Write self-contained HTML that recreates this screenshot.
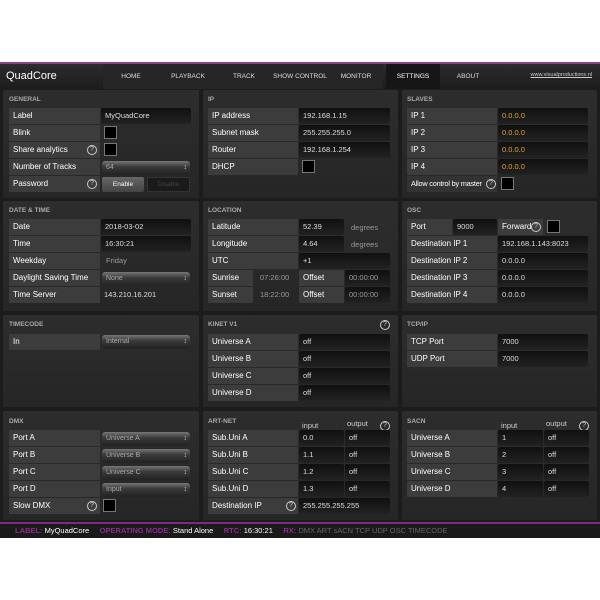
<!DOCTYPE html><html><head><style>
*{margin:0;padding:0;box-sizing:border-box}
body{width:600px;height:600px;background:#fff;position:relative;font-family:"Liberation Sans",sans-serif;overflow:hidden;color:#fff}
div{position:absolute}
#hdr{left:0;top:62px;width:600px;height:27px;background:linear-gradient(#2e2c2e,#1c1c1c);border-top:2px solid #8a3f8f}
#main{left:0;top:89px;width:600px;height:433px;background:#1c1c1c}
.nav{top:0;height:25px;line-height:25px;font-size:6.5px;color:#ddd;text-align:center;width:56px}
.p{background:linear-gradient(#2d2d2d,#262626);border-radius:2px}
.t{font-size:6.5px;color:#aaa;font-weight:bold}
.l{height:16px;line-height:16px;background:#3c3c3c;font-size:8px;padding-left:4px;color:#fff;white-space:nowrap}
.v{height:16px;line-height:16px;background:linear-gradient(#101010,#222);font-size:7.5px;padding-left:4px;color:#ddd;border-radius:2px}
.n{height:16px;line-height:16px;font-size:7.5px;padding-left:4px;color:#999}
.s{height:14px;line-height:14px;background:linear-gradient(#777,#3a3a3a 40%,#222);font-size:7px;padding-left:4px;color:#aaa;border-radius:3px}
.s:after{content:"\2195";position:absolute;right:3px;top:0;font-size:7px;color:#ccc}
.cb{width:13px;height:13px;background:#000;border:1px solid #777}
.q{width:10px;height:10px;border:1px solid #ccc;border-radius:50%;font-size:7px;line-height:8px;text-align:center;color:#ccc}
.h{font-size:7.5px;color:#ccc}
#st{left:0;top:522px;width:600px;height:16px;background:#1a1a1a;border-top:2px solid #7b2b84;font-size:7.5px;line-height:14px}
.m{color:#8b2c8f;font-weight:bold}
</style></head><body>
<div id="hdr">
<div style="left:6px;top:0;line-height:25px;font-size:11px;color:#fff">QuadCore</div>
<div style="left:103px;top:0;width:280px;height:25px;background:#262626"></div>
<div class="nav" style="left:103px">HOME</div>
<div class="nav" style="left:160px">PLAYBACK</div>
<div class="nav" style="left:216px">TRACK</div>
<div class="nav" style="left:272px">SHOW CONTROL</div>
<div class="nav" style="left:328px">MONITOR</div>
<div class="nav" style="left:386px;background:#161616;color:#fff;width:54px">SETTINGS</div>
<div class="nav" style="left:440px">ABOUT</div>
<div style="left:480px;width:112px;top:0;line-height:23px;font-size:5.5px;text-align:right;color:#ccc;text-decoration:underline">www.visualproductions.nl</div>
</div>
<div id="main"></div>

<!-- row1 -->
<div class="p" style="left:3px;top:90px;width:196px;height:108px"></div>
<div class="t" style="left:9px;top:96px">GENERAL</div>
<div class="l" style="left:9px;top:108px;width:91px">Label</div><div class="v" style="left:101px;top:108px;width:90px">MyQuadCore</div>
<div class="l" style="left:9px;top:125px;width:91px">Blink</div><div class="cb" style="left:104px;top:126px"></div>
<div class="l" style="left:9px;top:142px;width:91px">Share analytics</div><div class="q" style="left:87px;top:145px">?</div><div class="cb" style="left:104px;top:143px"></div>
<div class="l" style="left:9px;top:159px;width:91px">Number of Tracks</div><div class="s" style="left:102px;top:161px;width:88px">64</div>
<div class="l" style="left:9px;top:176px;width:91px">Password</div><div class="q" style="left:87px;top:179px">?</div>
<div style="left:102px;top:177px;width:42px;height:15px;background:linear-gradient(#666,#444);font-size:6.5px;text-align:center;line-height:15px;border-radius:2px">Enable</div>
<div style="left:147px;top:177px;width:43px;height:15px;background:#1a1a1a;border:1px solid #333;font-size:6.5px;text-align:center;line-height:13px;color:#444;border-radius:2px">Disable</div>

<div class="p" style="left:203px;top:90px;width:195px;height:108px"></div>
<div class="t" style="left:208px;top:96px">IP</div>
<div class="l" style="left:208px;top:108px;width:90px">IP address</div><div class="v" style="left:299px;top:108px;width:91px">192.168.1.15</div>
<div class="l" style="left:208px;top:125px;width:90px">Subnet mask</div><div class="v" style="left:299px;top:125px;width:91px">255.255.255.0</div>
<div class="l" style="left:208px;top:142px;width:90px">Router</div><div class="v" style="left:299px;top:142px;width:91px">192.168.1.254</div>
<div class="l" style="left:208px;top:159px;width:90px">DHCP</div><div class="cb" style="left:302px;top:160px"></div>

<div class="p" style="left:402px;top:90px;width:195px;height:108px"></div>
<div class="t" style="left:407px;top:96px">SLAVES</div>
<div class="l" style="left:407px;top:108px;width:90px">IP 1</div><div class="v" style="left:498px;top:108px;width:90px;color:#e8a030">0.0.0.0</div>
<div class="l" style="left:407px;top:125px;width:90px">IP 2</div><div class="v" style="left:498px;top:125px;width:90px;color:#e8a030">0.0.0.0</div>
<div class="l" style="left:407px;top:142px;width:90px">IP 3</div><div class="v" style="left:498px;top:142px;width:90px;color:#e8a030">0.0.0.0</div>
<div class="l" style="left:407px;top:159px;width:90px">IP 4</div><div class="v" style="left:498px;top:159px;width:90px;color:#e8a030">0.0.0.0</div>
<div class="l" style="left:407px;top:176px;width:90px;background:#333;font-size:7.3px;letter-spacing:-0.2px">Allow control by master</div><div class="q" style="left:486px;top:179px">?</div><div class="cb" style="left:501px;top:177px"></div>

<!-- row2 -->
<div class="p" style="left:3px;top:201px;width:196px;height:110px"></div>
<div class="t" style="left:9px;top:207px">DATE &amp; TIME</div>
<div class="l" style="left:9px;top:219px;width:91px">Date</div><div class="v" style="left:101px;top:219px;width:90px">2018-03-02</div>
<div class="l" style="left:9px;top:236px;width:91px">Time</div><div class="v" style="left:101px;top:236px;width:90px">16:30:21</div>
<div class="l" style="left:9px;top:253px;width:91px">Weekday</div><div class="n" style="left:102px;top:253px">Friday</div>
<div class="l" style="left:9px;top:270px;width:91px">Daylight Saving Time</div><div class="s" style="left:102px;top:272px;width:88px">None</div>
<div class="l" style="left:9px;top:287px;width:91px">Time Server</div><div class="n" style="left:100px;top:287px;color:#ddd">143.210.16.201</div>

<div class="p" style="left:203px;top:201px;width:195px;height:110px"></div>
<div class="t" style="left:208px;top:207px">LOCATION</div>
<div class="l" style="left:208px;top:219px;width:90px">Latitude</div><div class="v" style="left:299px;top:219px;width:45px">52.39</div><div class="n" style="left:347px;top:220px">degrees</div>
<div class="l" style="left:208px;top:236px;width:90px">Longitude</div><div class="v" style="left:299px;top:236px;width:45px">4.64</div><div class="n" style="left:347px;top:237px">degrees</div>
<div class="l" style="left:208px;top:253px;width:90px">UTC</div><div class="v" style="left:299px;top:253px;width:91px">+1</div>
<div class="l" style="left:208px;top:270px;width:45px">Sunrise</div><div class="n" style="left:256px;top:270px">07:26:00</div><div class="l" style="left:299px;top:270px;width:45px">Offset</div><div class="v" style="left:345px;top:270px;width:45px;color:#999">00:00:00</div>
<div class="l" style="left:208px;top:287px;width:45px">Sunset</div><div class="n" style="left:256px;top:287px">18:22:00</div><div class="l" style="left:299px;top:287px;width:45px">Offset</div><div class="v" style="left:345px;top:287px;width:45px;color:#999">00:00:00</div>

<div class="p" style="left:402px;top:201px;width:195px;height:110px"></div>
<div class="t" style="left:407px;top:207px">OSC</div>
<div class="l" style="left:407px;top:219px;width:45px">Port</div><div class="v" style="left:453px;top:219px;width:44px">9000</div><div class="l" style="left:498px;top:219px;width:45px">Forward</div><div class="q" style="left:531px;top:222px">?</div><div class="cb" style="left:547px;top:220px"></div>
<div class="l" style="left:407px;top:236px;width:90px">Destination IP 1</div><div class="v" style="left:498px;top:236px;width:90px">192.168.1.143:8023</div>
<div class="l" style="left:407px;top:253px;width:90px">Destination IP 2</div><div class="v" style="left:498px;top:253px;width:90px">0.0.0.0</div>
<div class="l" style="left:407px;top:270px;width:90px">Destination IP 3</div><div class="v" style="left:498px;top:270px;width:90px">0.0.0.0</div>
<div class="l" style="left:407px;top:287px;width:90px">Destination IP 4</div><div class="v" style="left:498px;top:287px;width:90px">0.0.0.0</div>

<!-- row3 -->
<div class="p" style="left:3px;top:315px;width:196px;height:92px"></div>
<div class="t" style="left:9px;top:321px">TIMECODE</div>
<div class="l" style="left:9px;top:334px;width:91px">In</div><div class="s" style="left:102px;top:335px;width:88px">Internal</div>

<div class="p" style="left:203px;top:315px;width:195px;height:92px"></div>
<div class="t" style="left:208px;top:321px">KINET V1</div><div class="q" style="left:380px;top:320px">?</div>
<div class="l" style="left:208px;top:334px;width:90px">Universe A</div><div class="v" style="left:299px;top:334px;width:91px">off</div>
<div class="l" style="left:208px;top:351px;width:90px">Universe B</div><div class="v" style="left:299px;top:351px;width:91px">off</div>
<div class="l" style="left:208px;top:368px;width:90px">Universe C</div><div class="v" style="left:299px;top:368px;width:91px">off</div>
<div class="l" style="left:208px;top:385px;width:90px">Universe D</div><div class="v" style="left:299px;top:385px;width:91px">off</div>

<div class="p" style="left:402px;top:315px;width:195px;height:92px"></div>
<div class="t" style="left:407px;top:321px">TCP/IP</div>
<div class="l" style="left:407px;top:334px;width:90px">TCP Port</div><div class="v" style="left:498px;top:334px;width:90px">7000</div>
<div class="l" style="left:407px;top:351px;width:90px">UDP Port</div><div class="v" style="left:498px;top:351px;width:90px">7000</div>

<!-- row4 -->
<div class="p" style="left:3px;top:411px;width:196px;height:109px"></div>
<div class="t" style="left:9px;top:418px">DMX</div>
<div class="l" style="left:9px;top:430px;width:91px">Port A</div><div class="s" style="left:102px;top:432px;width:88px">Universe A</div>
<div class="l" style="left:9px;top:447px;width:91px">Port B</div><div class="s" style="left:102px;top:449px;width:88px">Universe B</div>
<div class="l" style="left:9px;top:464px;width:91px">Port C</div><div class="s" style="left:102px;top:466px;width:88px">Universe C</div>
<div class="l" style="left:9px;top:481px;width:91px">Port D</div><div class="s" style="left:102px;top:483px;width:88px">Input</div>
<div class="l" style="left:9px;top:498px;width:91px">Slow DMX</div><div class="q" style="left:87px;top:501px">?</div><div class="cb" style="left:103px;top:499px"></div>

<div class="p" style="left:203px;top:411px;width:195px;height:109px"></div>
<div class="t" style="left:208px;top:418px">ART-NET</div>
<div class="h" style="left:302px;top:421px">input</div><div class="h" style="left:347px;top:419px">output</div><div class="q" style="left:380px;top:421px">?</div>
<div class="l" style="left:208px;top:430px;width:90px">Sub.Uni A</div><div class="v" style="left:299px;top:430px;width:45px">0.0</div><div class="v" style="left:345px;top:430px;width:45px">off</div>
<div class="l" style="left:208px;top:447px;width:90px">Sub.Uni B</div><div class="v" style="left:299px;top:447px;width:45px">1.1</div><div class="v" style="left:345px;top:447px;width:45px">off</div>
<div class="l" style="left:208px;top:464px;width:90px">Sub.Uni C</div><div class="v" style="left:299px;top:464px;width:45px">1.2</div><div class="v" style="left:345px;top:464px;width:45px">off</div>
<div class="l" style="left:208px;top:481px;width:90px">Sub.Uni D</div><div class="v" style="left:299px;top:481px;width:45px">1.3</div><div class="v" style="left:345px;top:481px;width:45px">off</div>
<div class="l" style="left:208px;top:498px;width:90px">Destination IP</div><div class="q" style="left:286px;top:501px">?</div><div class="v" style="left:299px;top:498px;width:91px">255.255.255.255</div>

<div class="p" style="left:402px;top:411px;width:195px;height:109px"></div>
<div class="t" style="left:407px;top:418px">SACN</div>
<div class="h" style="left:501px;top:421px">input</div><div class="h" style="left:546px;top:419px">output</div><div class="q" style="left:579px;top:421px">?</div>
<div class="l" style="left:407px;top:430px;width:90px">Universe A</div><div class="v" style="left:498px;top:430px;width:45px">1</div><div class="v" style="left:544px;top:430px;width:45px">off</div>
<div class="l" style="left:407px;top:447px;width:90px">Universe B</div><div class="v" style="left:498px;top:447px;width:45px">2</div><div class="v" style="left:544px;top:447px;width:45px">off</div>
<div class="l" style="left:407px;top:464px;width:90px">Universe C</div><div class="v" style="left:498px;top:464px;width:45px">3</div><div class="v" style="left:544px;top:464px;width:45px">off</div>
<div class="l" style="left:407px;top:481px;width:90px">Universe D</div><div class="v" style="left:498px;top:481px;width:45px">4</div><div class="v" style="left:544px;top:481px;width:45px">off</div>

<div id="st"><div style="left:15px;top:0;white-space:nowrap"><span class="m">LABEL:</span> MyQuadCore &nbsp;&nbsp;&nbsp; <span class="m">OPERATING MODE:</span> Stand Alone &nbsp;&nbsp;&nbsp; <span class="m">RTC:</span> 16:30:21 &nbsp;&nbsp;&nbsp; <span class="m">RX:</span> <span style="color:#666">DMX ART sACN TCP UDP OSC TIMECODE</span></div></div>
</body></html>
